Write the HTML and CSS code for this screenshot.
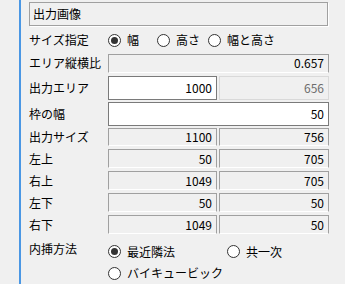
FILE: index.html
```html
<!DOCTYPE html>
<html lang="ja">
<head>
<meta charset="utf-8">
<link rel="stylesheet" href="styles.css">
</head>
<body>
<div class="wrap">
  <div class="gutter"></div>
  <div class="split"></div>
  <div class="panel">
    <div class="title">出力画像</div>

    <div class="row row-size">
      <div class="label">サイズ指定</div>
      <div class="radios">
        <div class="radio r1"><span class="dot on"></span><span>幅</span></div>
        <div class="radio r2"><span class="dot"></span><span>高さ</span></div>
        <div class="radio"><span class="dot"></span><span>幅と高さ</span></div>
      </div>
    </div>

    <div class="row ro-row">
      <div class="label">エリア縦横比</div>
      <div class="fields one"><div class="box ro">0.657</div></div>
    </div>

    <div class="row ed-row">
      <div class="label">出力エリア</div>
      <div class="fields two"><div class="box ed">1000</div><div class="box ro dis">656</div></div>
    </div>

    <div class="row ed-row">
      <div class="label">枠の幅</div>
      <div class="fields one"><div class="box ed">50</div></div>
    </div>

    <div class="row ro-row">
      <div class="label">出力サイズ</div>
      <div class="fields two"><div class="box ro">1100</div><div class="box ro">756</div></div>
    </div>
    <div class="row ro-row">
      <div class="label">左上</div>
      <div class="fields two"><div class="box ro">50</div><div class="box ro">705</div></div>
    </div>
    <div class="row ro-row">
      <div class="label">右上</div>
      <div class="fields two"><div class="box ro">1049</div><div class="box ro">705</div></div>
    </div>
    <div class="row ro-row">
      <div class="label">左下</div>
      <div class="fields two"><div class="box ro">50</div><div class="box ro">50</div></div>
    </div>
    <div class="row ro-row">
      <div class="label">右下</div>
      <div class="fields two"><div class="box ro">1049</div><div class="box ro">50</div></div>
    </div>

    <div class="row interp1">
      <div class="label lab-up">内挿方法</div>
      <div class="radios">
        <div class="radio i1"><span class="dot on"></span><span>最近隣法</span></div>
        <div class="radio"><span class="dot"></span><span>共一次</span></div>
      </div>
    </div>
    <div class="row interp2">
      <div class="label"></div>
      <div class="radios">
        <div class="radio"><span class="dot"></span><span>バイキュービック</span></div>
      </div>
    </div>
  </div>
</div>
</body>
</html>
```

FILE: styles.css
```css
html, body {
  margin: 0;
  padding: 0;
  background: #f0f0f0;
}
body {
  font-family: "Noto Sans CJK JP", "Noto Sans", sans-serif;
  font-size: 12px;
  color: #000;
  width: 345px;
  height: 284px;
  overflow: hidden;
}
.wrap {
  display: flex;
  height: 284px;
}
.gutter {
  width: 19px;
  flex: none;
}
.split {
  width: 2px;
  flex: none;
  background: #4a97e4;
}
.panel {
  padding-left: 8px;
  width: 300px;
  flex: none;
  display: flex;
  flex-direction: column;
}
.title {
  margin-top: 2px;
  height: 24px;
  width: 299px;
  box-sizing: border-box;
  border: 1px solid #a0a0a0;
  box-shadow: 1px 1px 0 #fff;
  padding-left: 3px;
  display: flex;
  align-items: center;
  line-height: 1;
}
.row {
  display: flex;
  align-items: center;
}
.label {
  width: 79px;
  flex: none;
  line-height: 1;
}
.row-size {
  height: 28px;
}
.row-size .radios {
  padding-top: 1px;
}
.ro-row {
  height: 19px;
  margin-bottom: 3px;
}
.ed-row {
  height: 24px;
  margin-bottom: 2px;
}
.fields {
  display: grid;
  height: 100%;
}
.fields.one {
  grid-template-columns: 221px;
}
.fields.two {
  grid-template-columns: 109px 110px;
  column-gap: 2px;
}
.box {
  box-sizing: border-box;
  height: 100%;
  display: flex;
  align-items: center;
  justify-content: flex-end;
  padding-right: 4px;
  line-height: 1;
}
.box.ro {
  background: #f0f0f0;
  border-style: solid;
  border-width: 1px;
  border-color: #a0a0a0 #a0a0a0 #fff #a0a0a0;
}
.box.ed {
  background: #fff;
  border: 1px solid #7a7a7a;
}
.box.dis {
  color: #6d6d6d;
  border-color: #d9d9d9;
}
.radios {
  display: flex;
  align-items: center;
}
.radio {
  display: flex;
  align-items: center;
  line-height: 1;
}
.radio.r1 { width: 49px; }
.radio.r2 { width: 51px; }
.radio.i1 { width: 119px; }
.dot {
  width: 13px;
  height: 13px;
  box-sizing: border-box;
  border: 1px solid #333;
  border-radius: 50%;
  background: #fff;
  margin-right: 6px;
  position: relative;
  flex: none;
}
.dot.on::after {
  content: "";
  position: absolute;
  left: 2px;
  top: 2px;
  width: 7px;
  height: 7px;
  border-radius: 50%;
  background: #333;
}
.interp1 {
  margin-top: 4px;
  height: 21px;
}
.interp1 .lab-up {
  position: relative;
  top: -3px;
}
.interp2 {
  height: 22px;
}
```
